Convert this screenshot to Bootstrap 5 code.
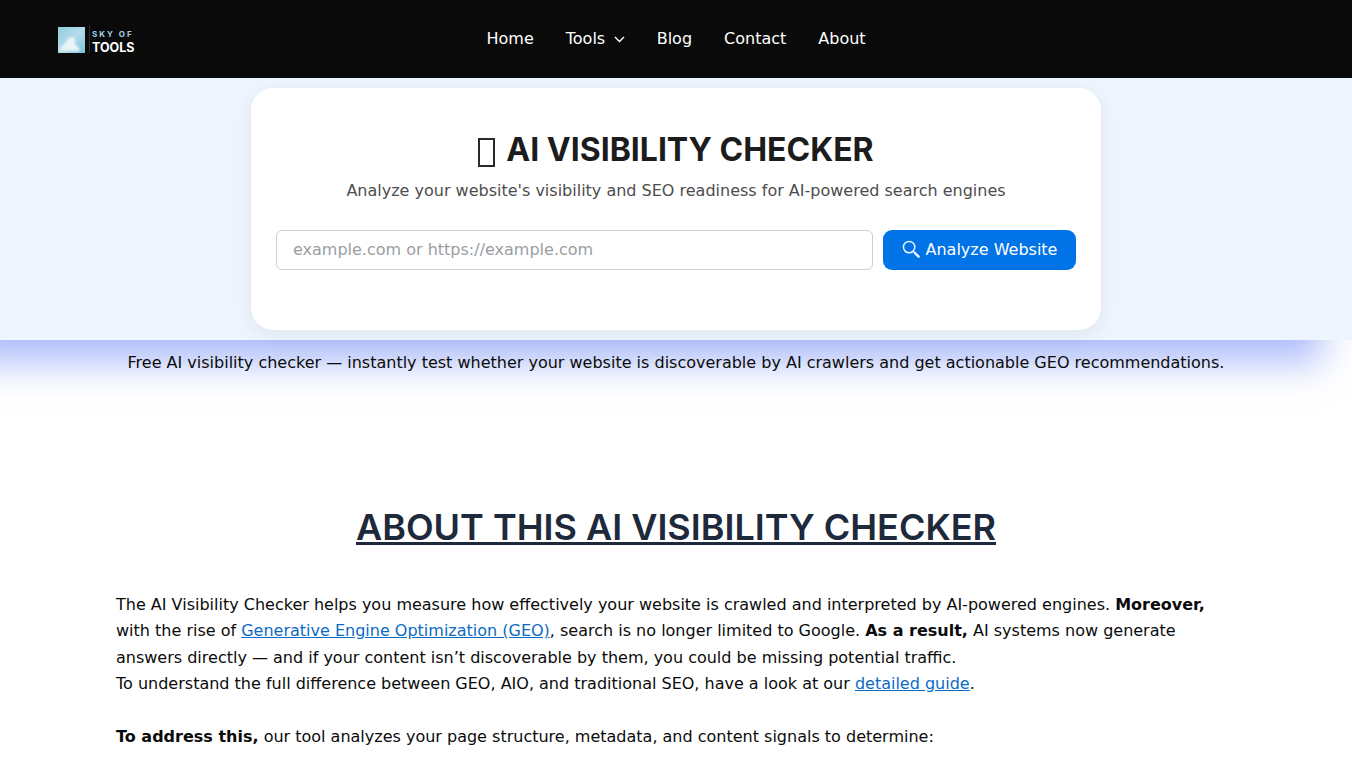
<!DOCTYPE html>
<html lang="en">

<head>
    <meta charset="UTF-8">
    <meta name="viewport" content="width=device-width, initial-scale=1.0">
    <title>AI Visibility Checker</title>
    <link rel="stylesheet" href="https://cdn.jsdelivr.net/npm/bootstrap@5.3.3/dist/css/bootstrap.min.css">
    <script src="https://cdn.jsdelivr.net/npm/bootstrap@5.3.3/dist/js/bootstrap.bundle.min.js"></script>
    <style>
        html, body { overflow: hidden; height: 760px; }
        body { font-family: "DejaVu Sans", sans-serif; font-size: 16px; color: #0b0b0b; background: #fff; }
        .top-bar { background: #0a0a0a; height: 78px; padding: 25px 0 0 58px; position: relative; z-index: 3; }
        .brand-mark { width: 77px; height: 29px; }
        .top-links { position: absolute; left: 470.5px; top: 23px; }
        .top-links a { color: #fff; text-decoration: none; padding: 0 16px; line-height: 32px; display: flex; align-items: center; }
        .top-links svg { margin-left: 8.5px; margin-top: 1px; }
        .hero-band { background: #eef5ff; height: 262px; padding-top: 10px; position: relative; z-index: 2; box-shadow: -30px 22px 36px rgba(120, 145, 245, .62); }
        .check-panel { width: 850px; height: 242px; background: #fff; border-radius: 22px; padding: 43px 25px 0; box-shadow: 0 4px 20px rgba(0, 0, 0, .07); }
        .check-title { font-family: Inter, sans-serif; font-weight: 700; font-size: 32px; line-height: 38px; color: #1c1c1c; margin: 0 0 9px; }
        .tofu-box { display: inline-block; width: 17px; height: 29px; border: 2px solid #2a2a2a; margin-right: 11px; vertical-align: -6px; }
        .check-sub { color: #4d4d4d; line-height: 26px; margin: 0 0 26px; }
        .check-form { column-gap: 10px; }
        .url-box { height: 40px; border: 1px solid #cfcfcf; border-radius: 6px; padding: 0 16px 2px; font-size: 16px; font-family: inherit; }
        .url-box::placeholder { color: #999ea5; }
        .go-btn { height: 40px; width: 193px; background: #0073e6; border: 0; border-radius: 9px; color: #fff; padding: 0; font-size: 16px; }
        .go-btn svg { margin-top: -3px; margin-right: 2px; }
        .note-line { position: relative; z-index: 3; line-height: 26px; padding-top: 10px; margin: 0; }
        .about-wrap { width: 1120px; margin: 0 auto; position: relative; z-index: 3; }
        .about-title { font-family: Inter, sans-serif; font-weight: 600; font-size: 36px; line-height: 44px; color: #1e293b; text-decoration: underline; margin: 129px 0 43px; }
        .about-text { line-height: 26.4px; margin: 0 0 26.4px; }
        .about-text a { color: #0b6bc4; }
    </style>
</head>

<body>
    <header class="top-bar">
        <svg class="brand-mark d-block" viewBox="0 0 77 29">
            <defs>
                <linearGradient id="sky" x1="0" y1="0" x2="1" y2="1">
                    <stop offset="0" stop-color="#8fcde0" />
                    <stop offset=".5" stop-color="#b5dcea" />
                    <stop offset="1" stop-color="#7dbfdc" />
                </linearGradient>
                <filter id="soft"><feGaussianBlur stdDeviation="1.2" /></filter>
            </defs>
            <rect x="0" y="2" width="27" height="26" fill="url(#sky)" />
            <path d="M2 25c1-5 5-5 7-9 0-3 4-5 7-3 2 4 0 6 3 8 2 1 3 3 2 5H3z" fill="#eaf4f6" filter="url(#soft)" />
            <rect x="31" y="0" width="1" height="28" fill="#2e2e2e" />
            <text x="34" y="12" font-family="Inter, sans-serif" font-size="8" font-weight="700" letter-spacing="2" fill="#a4d3e6">SKY OF</text>
            <text x="34" y="27" font-family="Inter, sans-serif" font-size="12.5" font-weight="700" fill="#fff">TOOLS</text>
        </svg>
        <nav class="top-links d-flex">
            <a href="#">Home</a>
            <a href="#">Tools
                <svg width="11" height="7" viewBox="0 0 11 7" fill="none" stroke="#fff" stroke-width="1.4"><path d="M1 1l4.5 4.5L10 1" /></svg>
            </a>
            <a href="#">Blog</a>
            <a href="#">Contact</a>
            <a href="#">About</a>
        </nav>
    </header>

    <section class="hero-band">
        <div class="check-panel mx-auto text-center">
            <h1 class="check-title"><span class="tofu-box"></span>AI VISIBILITY CHECKER</h1>
            <p class="check-sub">Analyze your website's visibility and SEO readiness for AI-powered search engines</p>
            <form class="check-form d-flex">
                <input type="text" class="url-box flex-grow-1" placeholder="example.com or https://example.com">
                <button type="button" class="go-btn d-inline-flex align-items-center justify-content-center gap-1">
                    <svg width="18" height="18" viewBox="0 0 19 19" fill="none" stroke="#eaf3ff"><circle cx="7.5" cy="7.5" r="6" stroke-width="1.6" /><path d="M12 12l1.5 1.5" stroke-width="1.4" /><path d="M13.5 13.5l4 4" stroke-width="2.6" stroke-linecap="round" /></svg>
                    <span>Analyze Website</span>
                </button>
            </form>
        </div>
    </section>

    <p class="note-line text-center">Free AI visibility checker — instantly test whether your website is discoverable by AI crawlers and get actionable GEO recommendations.</p>

    <section class="about-wrap">
        <h2 class="about-title text-center">ABOUT THIS AI VISIBILITY CHECKER</h2>
        <p class="about-text">The AI Visibility Checker helps you measure how effectively your website is crawled and interpreted by AI-powered engines. <strong>Moreover,</strong> with the rise of <a href="#">Generative Engine Optimization (GEO)</a>, search is no longer limited to Google. <strong>As a result,</strong> AI systems now generate answers directly — and if your content isn’t discoverable by them, you could be missing potential traffic.<br>To understand the full difference between GEO, AIO, and traditional SEO, have a look at our <a href="#">detailed guide</a>.</p>
        <p class="about-text"><strong>To address this,</strong> our tool analyzes your page structure, metadata, and content signals to determine:</p>
    </section>
</body>

</html>
